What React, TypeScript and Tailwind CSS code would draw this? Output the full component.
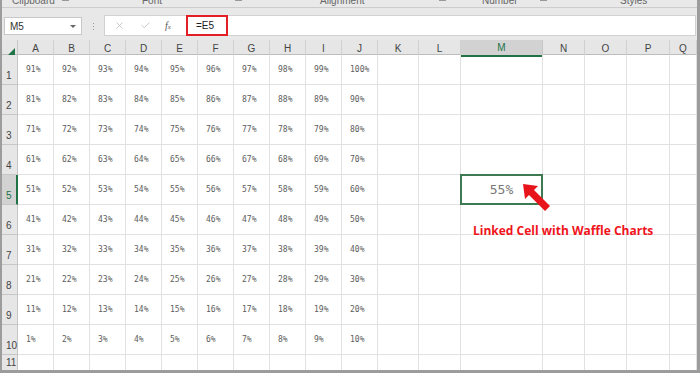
import { X, Check } from 'lucide-react';

const COLS = ['A', 'B', 'C', 'D', 'E', 'F', 'G', 'H', 'I', 'J', 'K', 'L', 'M', 'N', 'O', 'P', 'Q'];
const GRID = 'grid grid-cols-[16px_repeat(10,36px)_41px_42px_82px_42px_42px_43px_1fr]';

function Ribbon() {
  return (
    <div className="h-[8px] overflow-hidden bg-[#e9e9e9] border-b border-[#cdcdcd] text-[10px] text-[#666] relative">
      <div className="absolute -top-[7px] left-0 w-full h-[14px]">
        <span className="absolute left-[10px]">Clipboard</span>
        <span className="absolute left-[60px] top-[2px] w-[7px] h-[6px] border border-[#999]" />
        <span className="absolute left-[140px]">Font</span>
        <span className="absolute left-[233px] top-[2px] w-[7px] h-[6px] border border-[#999]" />
        <span className="absolute left-[318px]">Alignment</span>
        <span className="absolute left-[437px] top-[2px] w-[7px] h-[6px] border border-[#999]" />
        <span className="absolute left-[480px]">Number</span>
        <span className="absolute left-[538px] top-[2px] w-[7px] h-[6px] border border-[#999]" />
        <span className="absolute left-[618px]">Styles</span>
      </div>
    </div>
  );
}

function FormulaBar() {
  return (
    <div className="h-[32px] bg-[#e8e8e8] flex items-start pt-[7px] pr-[1px]" style={{ fontFamily: '"Liberation Sans", Arial, sans-serif' }}>
      {/* Name box */}
      <div className="ml-[2px] mt-[2px] w-[78px] h-[18px] bg-white border border-[#c8c8c8] flex items-center justify-between pl-[5px] pr-[5px]">
        <span className="text-[10px] text-[#333]">M5</span>
        <span className="w-0 h-0 border-l-[3px] border-r-[3px] border-t-[3px] border-l-transparent border-r-transparent border-t-[#666]" />
      </div>
      {/* Separator dots */}
      <div className="w-[22px] h-[22px] flex flex-col items-center justify-center gap-[2px]">
        <span className="w-[1px] h-[1px] bg-[#999]" />
        <span className="w-[1px] h-[1px] bg-[#999]" />
        <span className="w-[1px] h-[1px] bg-[#999]" />
      </div>
      {/* Formula input */}
      <div className="flex-1 h-[21px] bg-white border border-[#d2d2d2] flex items-center">
        <div className="w-[81px] h-full flex items-center">
          <X className="ml-[9px] w-[11px] h-[11px] text-[#b5b5b5]" strokeWidth={1.5} />
          <Check className="ml-[15px] w-[11px] h-[11px] text-[#b5b5b5]" strokeWidth={1.5} />
          <span className="ml-[14px] text-[10px] italic text-[#555]" style={{ fontFamily: '"Liberation Serif", serif' }}>
            f<span className="text-[7px]">x</span>
          </span>
        </div>
        <div className="w-[42px] h-[21px] -my-px border-2 border-[#e31e24] flex items-center pl-[8px]">
          <span className="text-[10px] text-[#222]">=E5</span>
        </div>
      </div>
    </div>
  );
}

function HeaderRow() {
  return (
    <div className={`${GRID} h-[15px] bg-[#e6e6e6] border-b border-[#bdbdbd]`}>
      <div className="relative border-r border-[#c6c6c6]">
        <span className="absolute right-[2px] bottom-[2px] w-0 h-0 border-l-[7px] border-t-[7px] border-l-transparent border-t-transparent border-b-0 border-r-0"
          style={{ borderBottom: '7px solid #217346', borderTop: '0', borderLeft: '7px solid transparent' }} />
      </div>
      {COLS.map((c) =>
        c === 'M' ? (
          <div key={c} className="flex items-center justify-center bg-[#d2d2d2] border-r border-[#c6c6c6] border-b-2 border-b-[#217346] text-[10px] text-[#217346]">
            {c}
          </div>
        ) : (
          <div key={c} className="flex items-center justify-center border-r border-[#d0d0d0] text-[10px] text-[#444]">
            {c}
          </div>
        )
      )}
    </div>
  );
}

function DataRow({ r }: { r: number }) {
  const sel = r === 5;
  return (
    <div className={`${GRID} h-[30px]`}>
      <div className={`flex items-end pl-[4px] pb-[1px] text-[10px] border-b border-r ${sel ? 'bg-[#d2d2d2] text-[#217346] border-r-2 border-r-[#217346] border-b-[#c6c6c6]' : 'bg-[#e6e6e6] text-[#444] border-[#c6c6c6]'}`}>
        {r}
      </div>
      {COLS.map((c, i) => {
        if (c === 'M' && sel) {
          return (
            <div key={c} className="relative border-r border-b border-[#e1e1e1]">
              <div className="absolute -left-px -top-px w-[83px] h-[31px] border-2 border-[#3d7a52] flex items-center justify-center z-10 bg-white">
                <span className="text-[13px] text-[#777]" style={{ fontFamily: '"DejaVu Sans Mono", "Liberation Mono", monospace' }}>55%</span>
              </div>
            </div>
          );
        }
        return (
          <div key={c} className="flex items-center pl-[8px] border-r border-b border-[#e1e1e1]">
            {i < 10 && (
              <span className="text-[8px] text-[#5c5c5c]" style={{ fontFamily: '"DejaVu Sans Mono", "Liberation Mono", monospace' }}>
                {(10 - r) * 10 + i + 1}%
              </span>
            )}
          </div>
        );
      })}
    </div>
  );
}

export default function App() {
  return (
    <div className="w-[700px] h-[373px] overflow-hidden bg-white border-l-2 border-r-[3px] border-b-[3px] border-[#9c9c9c] relative" style={{ fontFamily: '"Liberation Sans", Arial, sans-serif' }}>
      <Ribbon />
      <FormulaBar />
      <HeaderRow />
      {[1, 2, 3, 4, 5, 6, 7, 8, 9, 10].map((r) => (
        <DataRow key={r} r={r} />
      ))}
      <div className={`${GRID} h-[15px]`}>
        <div className="flex items-end pl-[4px] text-[10px] bg-[#e6e6e6] text-[#444] border-r border-[#c6c6c6]">11</div>
        {COLS.map((c) => (
          <div key={c} className="border-r border-[#e1e1e1]" />
        ))}
      </div>

      {/* annotation */}
      <svg className="absolute left-[517px] top-[180px] z-20" width="36" height="34" viewBox="0 0 36 34">
        <polygon points="4,4 19,6 15,10 31,26 26,31 10,15 6,19" fill="#e8141c" />
      </svg>
      <div className="absolute left-[471px] top-[222px] z-20 text-[12px] font-bold text-[#f0141c]" style={{ fontFamily: '"Open Sans", sans-serif' }}>
        Linked Cell with Waffle Charts
      </div>
    </div>
  );
}
